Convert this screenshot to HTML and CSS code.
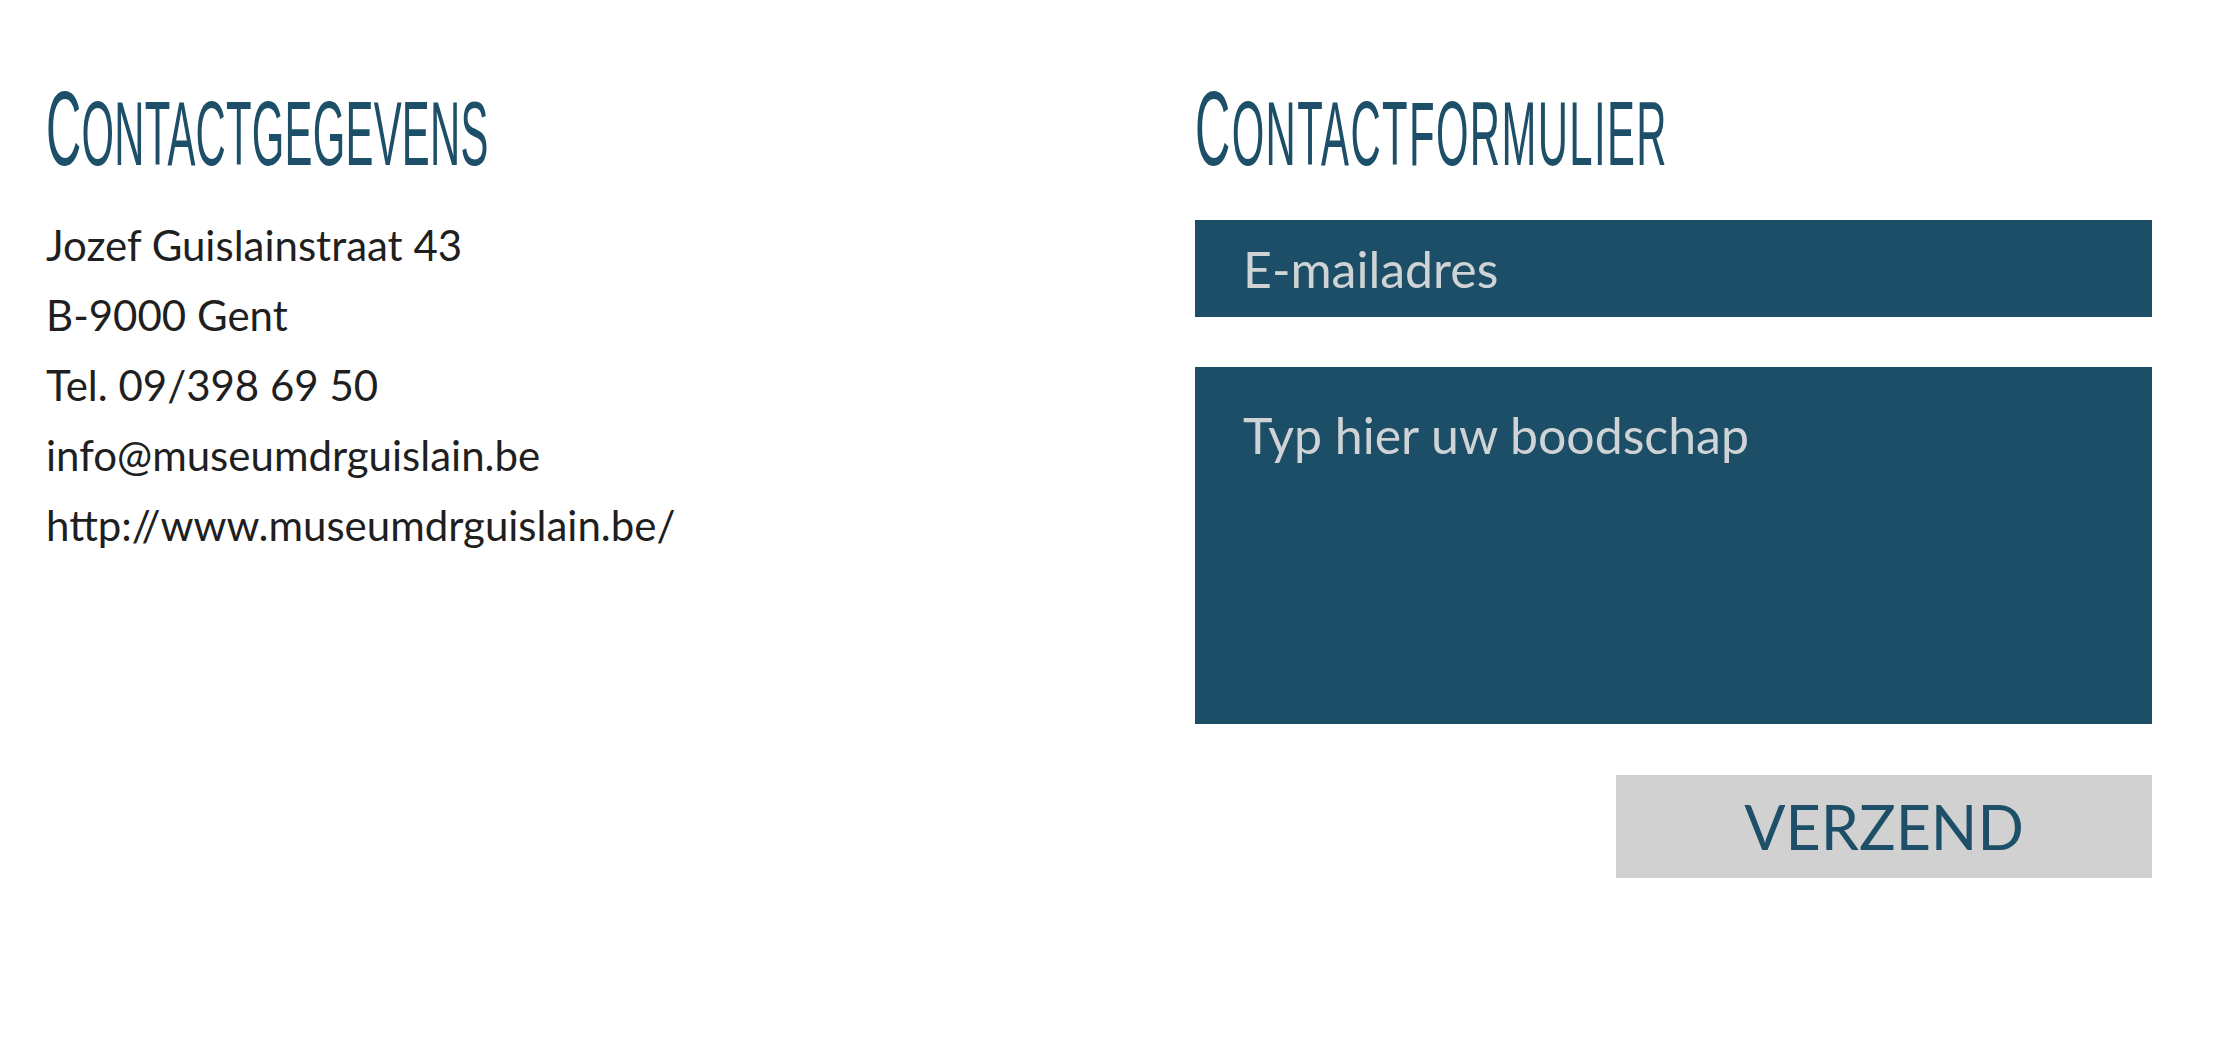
FILE: index.html
```html
<!DOCTYPE html>
<html lang="nl">
<head>
<meta charset="utf-8">
<title>Contact</title>
<link rel="stylesheet" href="styles.css">
</head>
<body>
<main class="page">
  <section class="col col-info">
    <h2 class="title"><span class="title-inner">Contactgegevens</span></h2>
    <div class="info">
      <p>Jozef Guislainstraat 43</p>
      <p>B-9000 Gent</p>
      <p>Tel. 09/398 69 50</p>
      <p>info@museumdrguislain.be</p>
      <p>http://www.museumdrguislain.be/</p>
    </div>
  </section>
  <section class="col col-form">
    <h2 class="title title-form"><span class="title-inner">Contactformulier</span></h2>
    <form class="form">
      <input class="field field-email" type="email" placeholder="E-mailadres">
      <textarea class="field field-msg" placeholder="Typ hier uw boodschap"></textarea>
      <div class="actions">
        <button class="send" type="button">VERZEND</button>
      </div>
    </form>
  </section>
</main>
</body>
</html>
```
FILE: styles.css
```css
* { box-sizing: border-box; }
html, body { margin: 0; padding: 0; background: #ffffff; }
body { font-family: Lato, "Open Sans", sans-serif; color: #1a1a1a; }

.page {
  display: grid;
  grid-template-columns: 1149px 957px;
  padding: 79px 0 0 46px;
}

.title {
  margin: 0;
  height: 100px;
  font-family: "Liberation Sans Narrow", "Liberation Sans", sans-serif;
  font-weight: 400;
  font-size: 90px;
  line-height: 100px;
  color: #1d5068;
  text-transform: uppercase;
  white-space: nowrap;
  letter-spacing: 0.5px;
}
.title-form { letter-spacing: 3px; }
.title-inner {
  display: inline-block;
  transform: scaleX(0.465);
  transform-origin: left center;
}
.title-inner::first-letter { font-size: 105px; }

.info { padding-top: 31px; }
.info p {
  margin: 0;
  font-size: 42px;
  line-height: 70px;
  color: #1f1f1f;
}

.form {
  display: flex;
  flex-direction: column;
  padding-top: 41px;
}
.field {
  display: block;
  width: 100%;
  border: 0;
  margin: 0;
  background: #1c4f67;
  color: #e6e6e6;
  font-family: Lato, "Open Sans", sans-serif;
  font-size: 50px;
  outline: none;
}
.field::placeholder { color: #cfd3d5; opacity: 1; }
.field-email { height: 97px; padding: 0 48px; }
.field-msg { height: 357px; margin-top: 50px; padding: 38px 48px; resize: none; line-height: 1.2; }

.actions { display: flex; justify-content: flex-end; margin-top: 51px; }
.send {
  width: 536px;
  height: 103px;
  border: 0;
  background: #d1d1d1;
  color: #1d5068;
  font-family: Lato, "Open Sans", sans-serif;
  font-size: 61px;
  padding: 0;
  cursor: pointer;
}
```
